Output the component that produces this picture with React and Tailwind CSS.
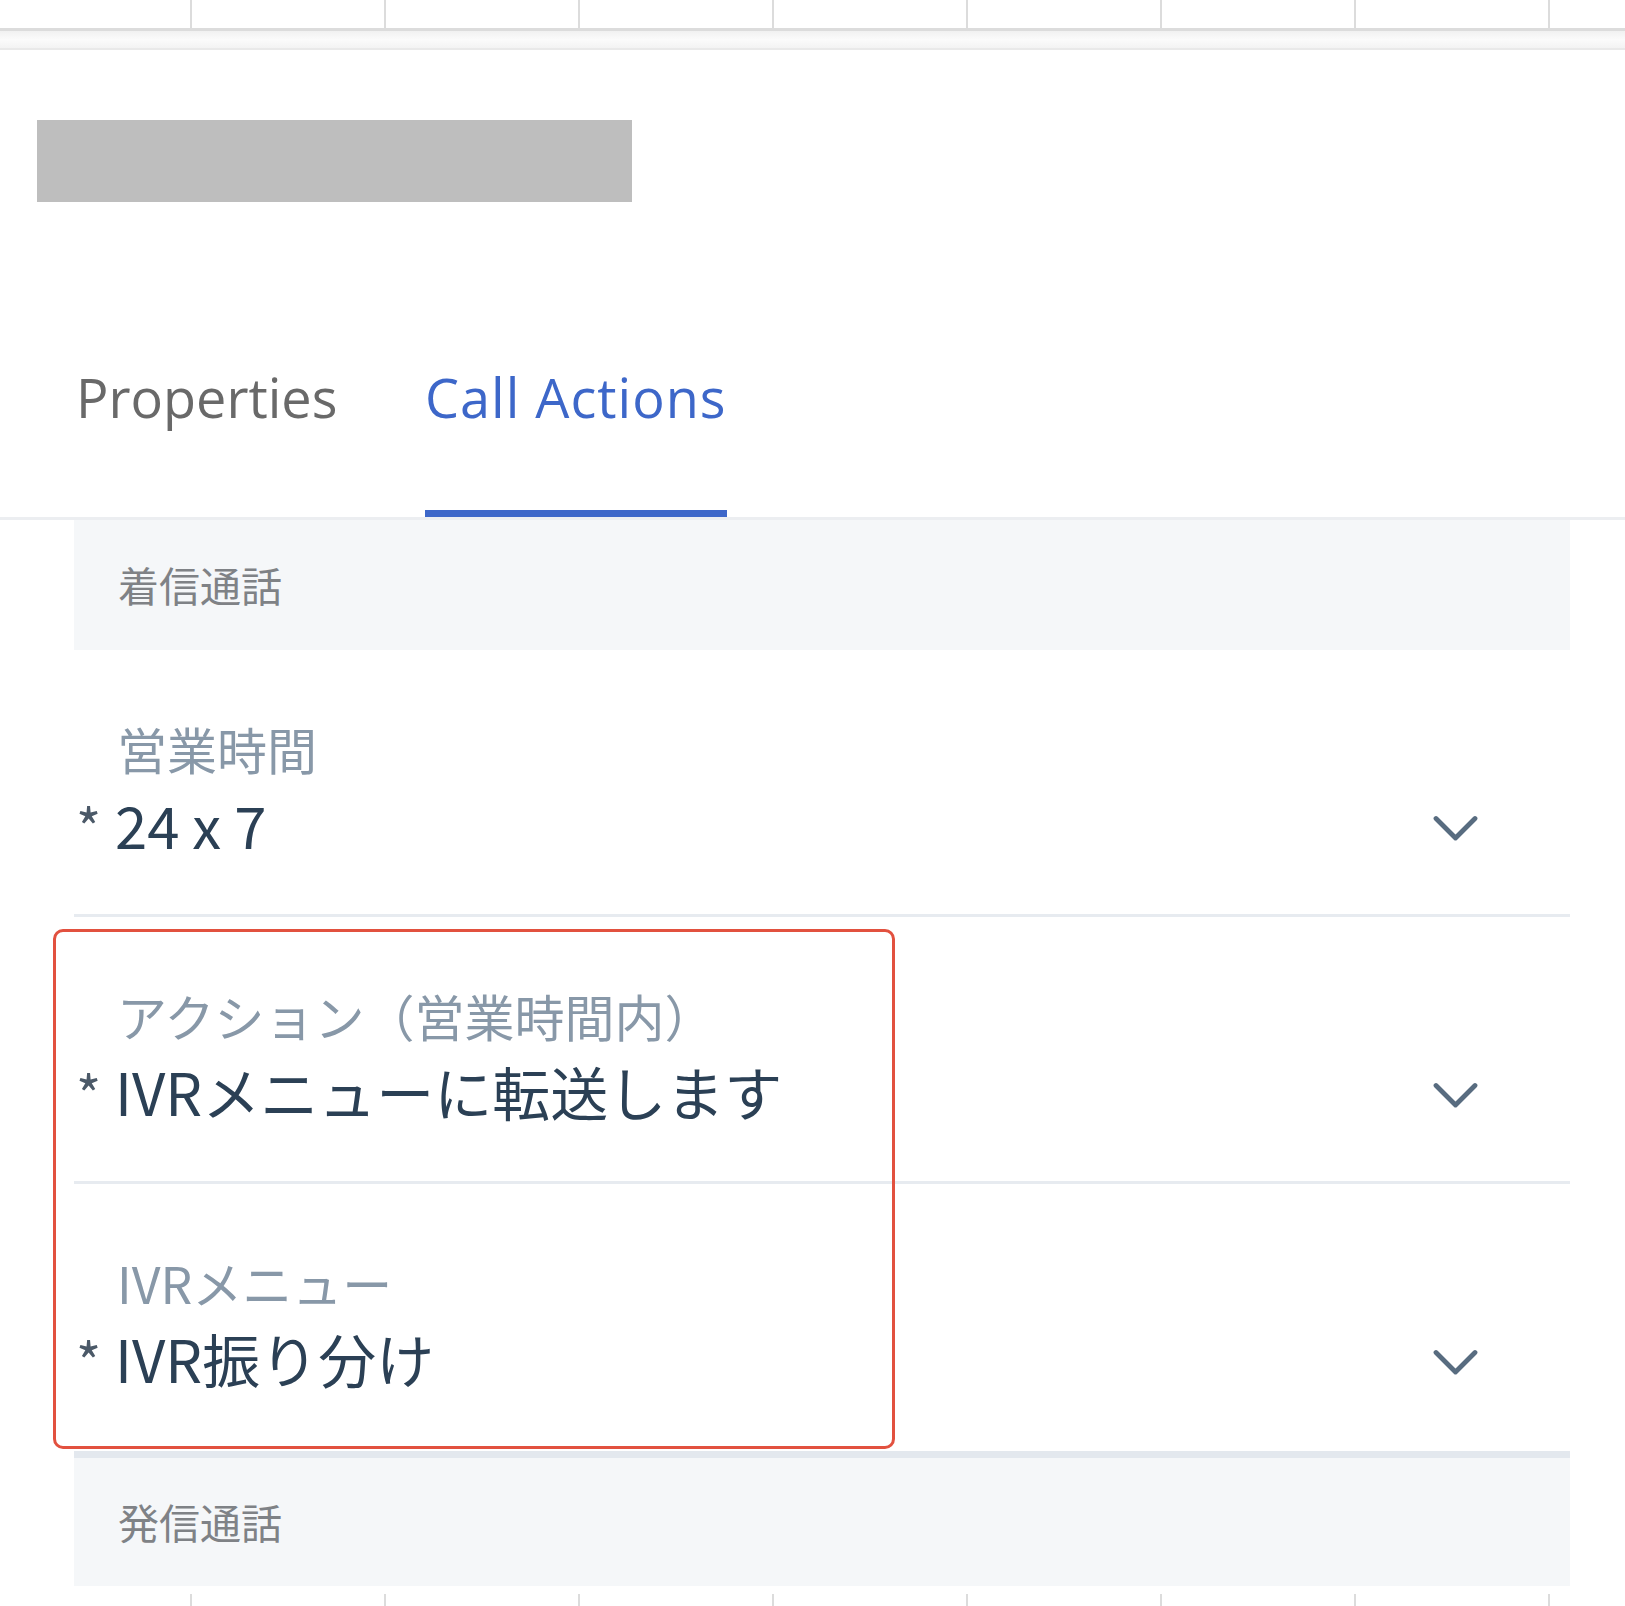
import React from "react";

const JP = { fontFamily: '"Noto Sans CJK JP", "Noto Sans", sans-serif' };

function Chevron() {
  return (
    <svg width="45" height="27" viewBox="0 0 45 27" className="shrink-0" fill="none">
      <polyline points="3,3.5 22.5,23 42,3.5" stroke="#586c80" strokeWidth="4.8" strokeLinecap="round" strokeLinejoin="round" />
    </svg>
  );
}

function Field({ label, value, last }) {
  return (
    <div
      className={`h-[267px] pl-[2px] pr-[92px] pt-[68px] ${
        last ? "" : "border-b-[3px] border-[#e7ebf0]"
      }`}
    >
      <div className="ml-[41px] text-[50px] leading-[60px] text-[#8898a8]">{label}</div>
      <div className="mt-[11px] flex items-start">
        <span className="w-[39px] shrink-0 text-[54px] leading-[73px] text-[#4b5968]">*</span>
        <span className="text-[58px] leading-[70px] text-[#2b4055] whitespace-nowrap">{value}</span>
        <div className="ml-auto flex h-[78px] items-center">
          <Chevron />
        </div>
      </div>
    </div>
  );
}

function Ticks({ h }) {
  return (
    <div className={`flex ${h}`}>
      <div className="w-[192px] shrink-0 border-r-2 border-[#dcdcdc]" />
      {Array.from({ length: 7 }).map((_, i) => (
        <div key={i} className="w-[194px] shrink-0 border-r-2 border-[#dcdcdc]" />
      ))}
      <div className="flex-1" />
    </div>
  );
}

export default function App() {
  return (
    <div className="relative w-[1625px] h-[1606px] overflow-hidden bg-white" style={JP}>
      {/* top grid */}
      <Ticks h="h-[28px]" />
      <div className="h-[3px] bg-[#dcdcdc]" />
      <div className="h-[19px] border-b-2 border-[#e9e9e9] bg-gradient-to-b from-[#f1f1f1] via-[#fbfbfb] to-[#f3f3f3]" />

      {/* placeholder title */}
      <div className="ml-[37px] mt-[70px] h-[82px] w-[595px] bg-[#bebebe]" />

      {/* tabs */}
      <div
        className="mt-[158px] flex border-b-[3px] border-[#eceef1]"
        style={{ fontFamily: '"Open Sans", "Noto Sans", sans-serif' }}
      >
        <div className="w-[425px] shrink-0 pl-[76px] pb-[76px] border-b-[7px] border-transparent text-[54px] leading-[74px] text-[#696969]">
          Properties
        </div>
        <div className="pb-[76px] border-b-[7px] border-[#3d67c9] text-[54px] leading-[74px] tracking-[1px] text-[#3d67c9] whitespace-nowrap">
          Call Actions
        </div>
      </div>

      {/* content column */}
      <div className="ml-[74px] w-[1496px]">
        <div className="flex h-[130px] items-center bg-[#f5f7f9] pl-[44px] text-[41px] text-[#7f8286]">
          着信通話
        </div>
        <Field label="営業時間" value="24 x 7" />
        <Field label="アクション（営業時間内）" value="IVRメニューに転送します" />
        <Field label="IVRメニュー" value="IVR振り分け" last />
        <div className="flex h-[135px] items-center border-t-[7px] border-[#e3e8ee] bg-[#f5f7f9] pl-[44px] text-[41px] text-[#7f8286]">
          発信通話
        </div>
      </div>

      <div className="mt-[8px]">
        <Ticks h="h-[12px]" />
      </div>

      {/* highlight annotation */}
      <div className="absolute left-[53px] top-[929px] h-[520px] w-[842px] rounded-[10px] border-[3px] border-[#e2513f]" />
    </div>
  );
}
